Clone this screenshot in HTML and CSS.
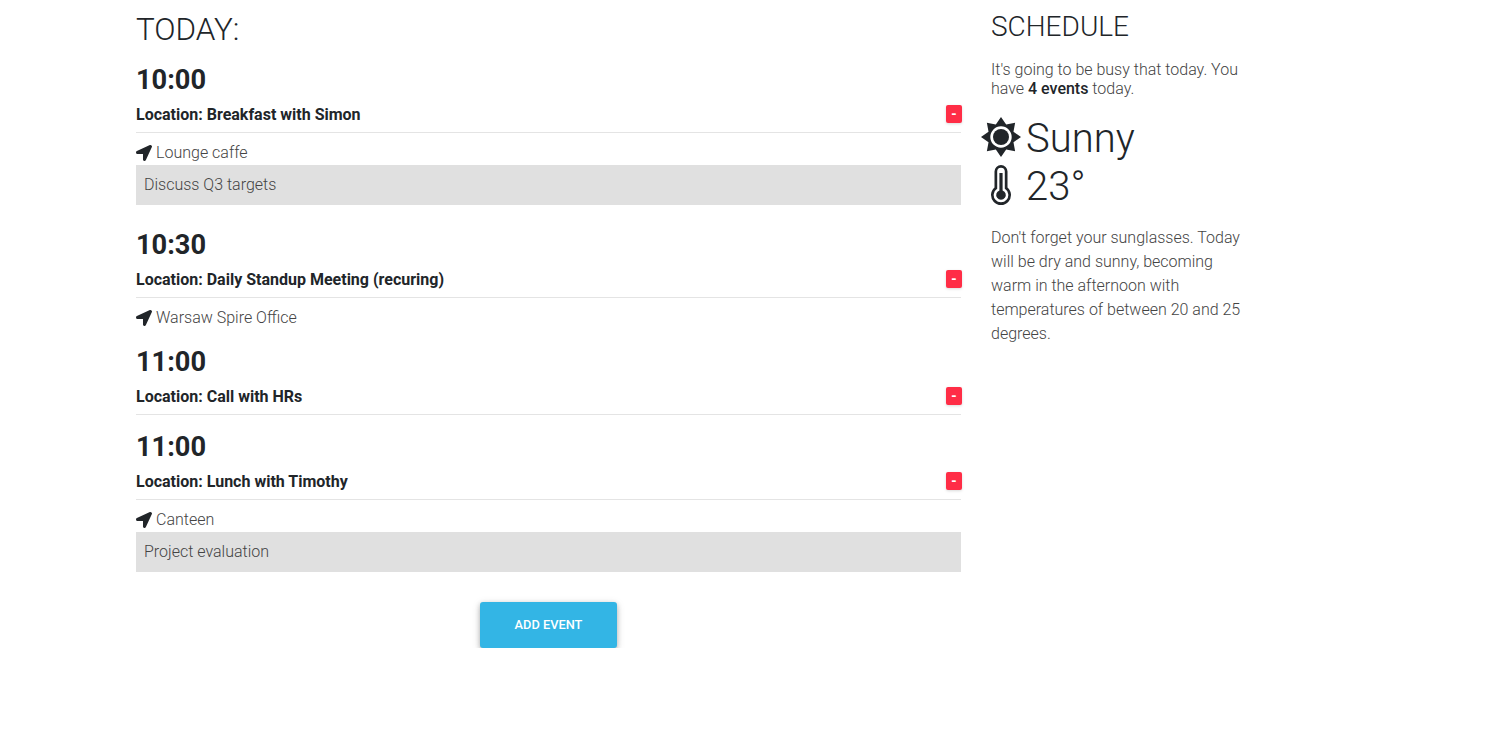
FILE: index.html
```html
<!DOCTYPE html>
<html lang="en">
<head>
  <meta charset="UTF-8">
  <title>Today</title>
  <link rel="stylesheet" href="styles.css">
</head>
<body>
  <svg class="defs" width="0" height="0">
    <symbol id="arrow" viewBox="0 0 512 512">
      <path d="M444.52 3.52L28.74 195.42c-47.97 22.39-31.98 92.75 19.19 92.75h175.91v175.91c0 51.17 70.36 67.17 92.75 19.19l191.9-415.78c15.99-38.39-25.59-79.97-63.97-63.97z"/>
    </symbol>
  </svg>

  <div class="container">
    <div class="main">
      <h1>TODAY:</h1>

      <div class="event">
        <h2>10:00</h2>
        <div class="title">
          <strong>Location: Breakfast with Simon</strong>
          <button class="remove-btn">-</button>
        </div>
        <div class="place"><svg class="arrow"><use href="#arrow"/></svg> Lounge caffe</div>
        <div class="note">Discuss Q3 targets</div>
      </div>

      <div class="event">
        <h2>10:30</h2>
        <div class="title">
          <strong>Location: Daily Standup Meeting (recuring)</strong>
          <button class="remove-btn">-</button>
        </div>
        <div class="place"><svg class="arrow"><use href="#arrow"/></svg> Warsaw Spire Office</div>
      </div>

      <div class="event">
        <h2>11:00</h2>
        <div class="title">
          <strong>Location: Call with HRs</strong>
          <button class="remove-btn">-</button>
        </div>
      </div>

      <div class="event">
        <h2>11:00</h2>
        <div class="title">
          <strong>Location: Lunch with Timothy</strong>
          <button class="remove-btn">-</button>
        </div>
        <div class="place"><svg class="arrow"><use href="#arrow"/></svg> Canteen</div>
        <div class="note">Project evaluation</div>
      </div>

      <div class="actions">
        <button class="add-btn">ADD EVENT</button>
      </div>
    </div>

    <div class="side">
      <h3>SCHEDULE</h3>
      <p class="intro">It's going to be busy that today. You have <strong>4 events</strong> today.</p>

      <div class="weather">
        <svg class="weather-icon" viewBox="0 0 40 40">
          <path fill-rule="evenodd" d="M20 0L25.17 7.53 34.14 5.86 32.47 14.83 40 20 32.47 25.17 34.14 34.14 25.17 32.47 20 40 14.83 32.47 5.86 34.14 7.53 25.17 0 20 7.53 14.83 5.86 5.86 14.83 7.53zM20 9.300a10.700 10.700 0 1 0 0 21.400 10.700 10.700 0 0 0 0-21.400z"/>
          <circle cx="20" cy="20" r="8"/>
        </svg>
        <span>Sunny</span>
      </div>
      <div class="weather">
        <svg class="weather-icon" viewBox="0 0 40 40">
          <path fill-rule="evenodd" d="M20 0a6.500 6.500 0 0 1 6.500 6.500v15.900a10 10 0 1 1-13 0V6.500A6.500 6.500 0 0 1 20 0zm0 2.700a3.800 3.800 0 0 0-3.800 3.800v17.300a7.300 7.300 0 1 0 7.600 0V6.500A3.800 3.800 0 0 0 20 2.700z"/>
          <path d="M18.400 8h3.200v17.470a4.800 4.800 0 1 1-3.200 0z"/>
        </svg>
        <span>23°</span>
      </div>

      <p class="forecast">Don't forget your sunglasses. Today will be dry and sunny, becoming warm in the afternoon with temperatures of between 20 and 25 degrees.</p>
    </div>
  </div>
</body>
</html>
```

FILE: styles.css
```css
* {
  box-sizing: border-box;
}

body {
  margin: 0;
  font-family: Roboto, sans-serif;
  font-weight: 300;
  font-size: 16px;
  line-height: 24px;
  color: #212529;
  background: white;
}

.defs {
  display: block;
}

.container {
  display: grid;
  grid-template-columns: 855px 285px;
  width: 1140px;
  margin-left: 121px;
}

.main, .side {
  padding: 0 15px;
}

h1 {
  margin: 9px 0 12px;
  font-size: 31.4px;
  line-height: 42px;
  font-weight: 300;
}

h2 {
  margin: 0 0 6px;
  font-size: 27.2px;
  line-height: 34px;
  font-weight: 700;
}

.event {
  margin-bottom: 15px;
}

.title {
  display: flex;
  justify-content: space-between;
  align-items: center;
  height: 30px;
  padding-bottom: 6px;
  border-bottom: 1px solid #e4e4e4;
}

.title strong {
  font-weight: 700;
}

.remove-btn {
  width: 16px;
  height: 18px;
  margin-top: -2px;
  margin-right: -1px;
  padding: 0;
  border: none;
  border-radius: 2px;
  background: #ff2d46;
  color: white;
  font-family: Roboto, sans-serif;
  font-size: 13px;
  line-height: 18px;
  font-weight: 900;
  box-shadow: 0 1px 3px rgba(0, 0, 0, 0.15);
}

.place {
  display: flex;
  align-items: center;
  gap: 4px;
  height: 24px;
  margin-top: 8px;
  color: #444;
}

.arrow {
  width: 16px;
  height: 16px;
  fill: #212529;
}

.note {
  margin-bottom: 23px;
  padding: 8px;
  background: #e0e0e0;
  color: #444;
}

.actions {
  display: flex;
  justify-content: center;
  margin-top: 30px;
}

.add-btn {
  width: 137px;
  height: 46px;
  padding: 0 0 2px;
  border: none;
  border-radius: 3px;
  background: #33b5e5;
  color: white;
  font-family: Roboto, sans-serif;
  font-size: 12.8px;
  font-weight: 500;
  box-shadow: 0 2px 5px rgba(0, 0, 0, 0.25), 0 2px 10px rgba(0, 0, 0, 0.12);
}

h3 {
  margin: 9px 0 15px;
  font-size: 28px;
  line-height: 36px;
  font-weight: 300;
}

.intro {
  margin: 0 0 15px;
  line-height: 19px;
  color: #444;
}

.intro strong {
  font-weight: 500;
  color: #212529;
}

.weather {
  display: flex;
  align-items: center;
  gap: 5px;
  height: 48px;
  margin-left: -10px;
  font-size: 40px;
  line-height: 48px;
}

.weather span {
  padding-top: 3px;
}

.weather-icon {
  width: 40px;
  height: 40px;
  fill: #212529;
}

.forecast {
  margin: 17px 0 0;
  color: #444;
}
```
